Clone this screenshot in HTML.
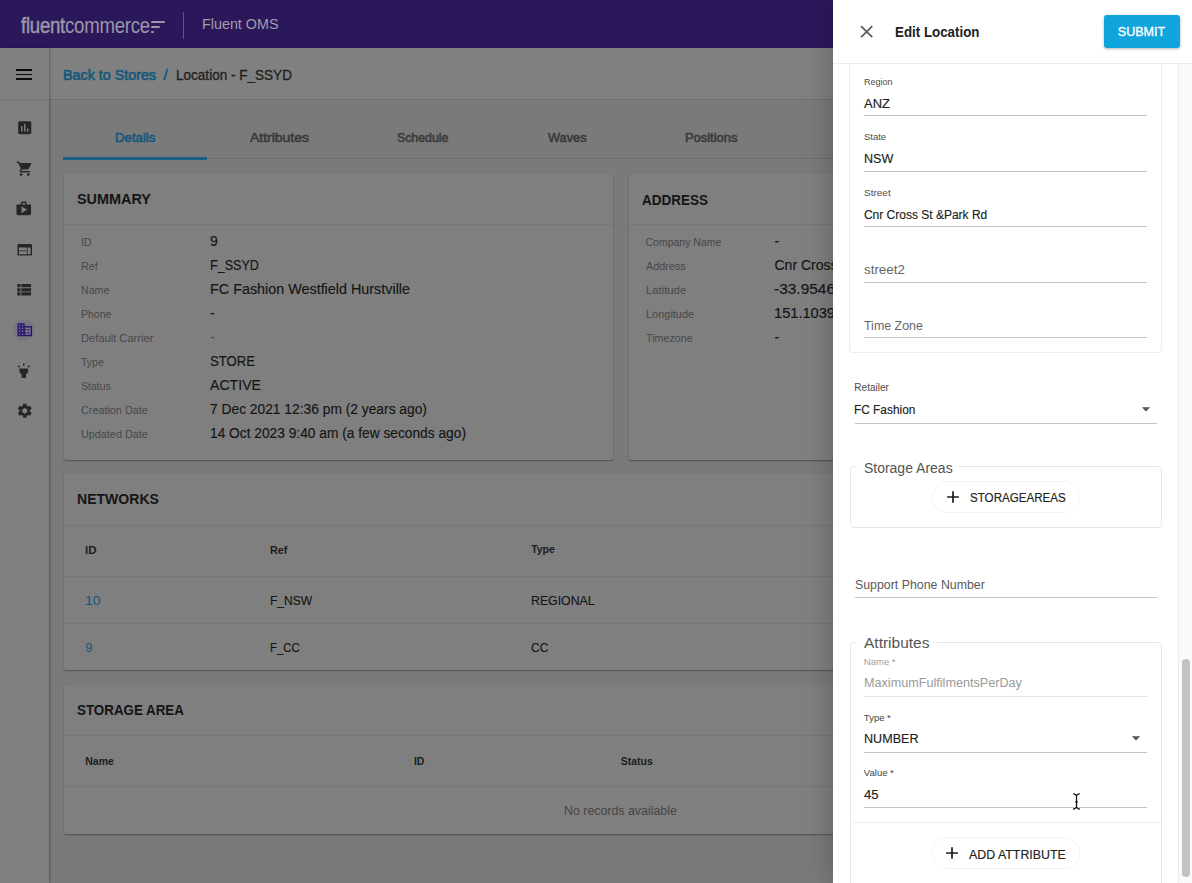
<!DOCTYPE html>
<html><head><meta charset="utf-8">
<style>
*{box-sizing:border-box;margin:0;padding:0}
html,body{width:1192px;height:883px;overflow:hidden;background:#7a7a7a;font-family:"Liberation Sans",sans-serif;color:#111}
.a{position:absolute;white-space:nowrap;line-height:1;transform-origin:0 0}
.b{position:absolute}
.card{position:absolute;background:#7f7f7f;box-shadow:0 1px 1.5px rgba(0,0,0,.35);border-radius:2px}
.hr{position:absolute;height:1px;background:#767676}
.ic{position:absolute;fill:#262626}
.ul{position:absolute;height:1px;background:#c4c4c4}
</style></head><body>
<!-- header -->
<div class="b" style="left:0;top:0;width:1192px;height:48px;background:#2b185b"></div>
<div class="a" style="left:21px;top:15px;font-size:22px;color:#9b97a7;transform-origin:0 0;transform:scaleX(0.846);letter-spacing:-0.3px"><span style="-webkit-text-stroke:0.5px #9b97a7">fluent</span>commerce</div>
<div class="b" style="left:151px;top:21px;width:14px;height:2px;background:#9b97a7;border-radius:1px"></div>
<div class="b" style="left:151px;top:25.5px;width:9px;height:2px;background:#9b97a7;border-radius:1px"></div>
<div class="b" style="left:151px;top:31px;width:3px;height:2px;background:#9b97a7;border-radius:1px"></div>
<div class="b" style="left:183px;top:12px;width:1px;height:27px;background:#5f5380"></div>

<!-- breadcrumb bar -->
<div class="b" style="left:49px;top:48px;width:1143px;height:52px;background:#808080"></div>
<div class="b" style="left:49px;top:99px;width:1143px;height:1px;background:#6f6f6f"></div>
<!-- sidebar -->
<div class="b" style="left:0;top:48px;width:49px;height:835px;background:#808080;box-shadow:1px 0 2px rgba(0,0,0,.3)"></div>
<div class="b" style="left:0;top:99px;width:49px;height:1px;background:#767676"></div>
<div class="b" style="left:16.1px;top:69.2px;width:16px;height:1.8px;background:#0c0c0c"></div><div class="b" style="left:16.1px;top:73.7px;width:16px;height:1.8px;background:#0c0c0c"></div><div class="b" style="left:16.1px;top:78.1px;width:16px;height:1.8px;background:#0c0c0c"></div>
<svg class="ic" style="left:15.5px;top:118.5px" width="17.5" height="17.5" viewBox="0 0 24 24"><path d="M19 3H5c-1.1 0-2 .9-2 2v14c0 1.1.9 2 2 2h14c1.1 0 2-.9 2-2V5c0-1.1-.9-2-2-2zM9 17H7v-7h2v7zm4 0h-2V7h2v10zm4 0h-2v-4h2v4z"/></svg>
<svg class="ic" style="left:15.8px;top:159.5px" width="17.5" height="17.5" viewBox="0 0 24 24"><path d="M7 18c-1.1 0-1.99.9-1.99 2S5.9 22 7 22s2-.9 2-2-.9-2-2-2zM1 2v2h2l3.6 7.59-1.35 2.45c-.16.28-.25.61-.25.96 0 1.1.9 2 2 2h12v-2H7.42c-.14 0-.25-.11-.25-.25l.03-.12.9-1.63h7.45c.75 0 1.410-.41 1.75-1.03l3.58-6.49c.08-.14.12-.31.12-.48 0-.55-.45-1-1-1H5.21l-.94-2H1zm16 16c-1.1 0-1.99.9-1.99 2s.89 2 1.99 2 2-.9 2-2-.9-2-2-2z"/></svg>
<svg class="ic" style="left:15px;top:199.5px" width="17.5" height="17.5" viewBox="0 0 24 24"><path d="M16 6V4c0-1.11-.89-2-2-2h-4c-1.11 0-2 .89-2 2v2H2v13c0 1.11.89 2 2 2h16c1.11 0 2-.89 2-2V6h-6zm-6-2h4v2h-4V4zM9 18V9l7.5 4L9 18z"/></svg>
<svg class="ic" style="left:15.5px;top:240.5px" width="17.5" height="17.5" viewBox="0 0 24 24"><path d="M20 4H4c-1.1 0-1.99.9-1.99 2L2 18c0 1.1.9 2 2 2h16c1.1 0 2-.9 2-2V6c0-1.1-.9-2-2-2zm-5 14H4v-4h11v4zm0-5H4V9h11v4zm5 5h-4V9h4v9z"/></svg>
<svg class="ic" style="left:13.95px;top:279.5px" width="19.5" height="19.5" viewBox="0 0 24 24"><path d="M4 14h4v-4H4v4zm0 5h4v-4H4v4zM4 9h4V5H4v4zm5 5h12v-4H9v4zm0 5h12v-4H9v4zM9 5v4h12V5H9z"/></svg>
<div class="b" style="left:13px;top:319px;width:22px;height:22px;border-radius:50%;background:rgba(70,40,140,.12)"></div>
<svg class="ic" style="left:15.5px;top:321px" width="17.5" height="17.5" viewBox="0 0 24 24"><path fill="#2a1870" d="M12 7V3H2v18h20V7H12zM6 19H4v-2h2v2zm0-4H4v-2h2v2zm0-4H4V9h2v2zm0-4H4V5h2v2zm4 12H8v-2h2v2zm0-4H8v-2h2v2zm0-4H8V9h2v2zm0-4H8V5h2v2zm10 12h-8v-2h2v-2h-2v-2h2v-2h-2V9h8v10zm-2-8h-2v2h2v-2zm0 4h-2v2h2v-2z"/></svg>
<svg class="ic" style="left:15px;top:362px" width="17.5" height="17.5" viewBox="0 0 24 24"><path d="M6 14l3 3v5h6v-5l3-3V9H6zm5-12h2v3h-2zM3.5 5.875L4.914 4.46l2.12 2.122L5.62 7.997zm13.46.71l2.123-2.12 1.414 1.414L18.375 8z"/></svg>
<svg class="ic" style="left:15.5px;top:402px" width="17.5" height="17.5" viewBox="0 0 24 24"><path d="M19.14 12.94c.04-.3.06-.61.06-.94 0-.32-.02-.64-.07-.94l2.03-1.58c.18-.14.23-.41.12-.61l-1.920-3.32c-.12-.22-.37-.29-.59-.22l-2.39.96c-.5-.38-1.03-.7-1.62-.94l-.36-2.54c-.04-.24-.24-.41-.48-.41h-3.84c-.24 0-.43.17-.47.41l-.36 2.54c-.59.24-1.13.57-1.62.94l-2.39-.96c-.22-.08-.47 0-.59.22L2.74 8.87c-.12.21-.08.47.12.61l2.03 1.58c-.05.3-.09.63-.09.94s.02.64.07.94l-2.03 1.58c-.18.14-.23.41-.12.61l1.92 3.32c.12.22.37.29.59.22l2.39-.96c.5.38 1.03.7 1.62.94l.36 2.54c.05.24.24.41.48.41h3.84c.24 0 .44-.17.47-.41l.36-2.54c.59-.24 1.13-.56 1.62-.94l2.39.96c.22.08.47 0 .59-.22l1.92-3.32c.12-.22.07-.47-.12-.61l-2.01-1.58zM12 15.6c-1.98 0-3.6-1.62-3.6-3.6s1.62-3.6 3.6-3.6 3.6 1.62 3.6 3.6-1.62 3.6-3.6 3.6z"/></svg>


<!-- tabs -->
<div class="b" style="left:63px;top:158px;width:780px;height:1px;background:#6c6c6c"></div>
<div class="b" style="left:63px;top:157px;width:144px;height:3px;background:#1a6183"></div>

<!-- cards -->
<div class="card" style="left:63.5px;top:174px;width:549px;height:285.5px"><div class="hr" style="left:0;top:50px;width:549px"></div></div>
<div class="card" style="left:628.5px;top:174px;width:600px;height:285.5px"><div class="hr" style="left:0;top:50px;width:600px"></div></div>
<div class="card" style="left:63.5px;top:474px;width:1140px;height:196px">
  <div class="hr" style="left:0;top:51px;width:1140px"></div>
  <div class="hr" style="left:0;top:102px;width:1140px"></div>
  <div class="hr" style="left:0;top:149px;width:1140px"></div>
</div>
<div class="card" style="left:63.5px;top:685px;width:1140px;height:149px">
  <div class="hr" style="left:0;top:50px;width:1140px"></div>
  <div class="hr" style="left:0;top:101px;width:1140px"></div>
</div>
<div class="a" style="left:202.00px;top:17.00px;font-size:14.5px;color:#a09cab;transform:scaleX(0.9889)">Fluent OMS</div>
<div class="a" style="left:62.90px;top:67.00px;font-size:15px;color:#13587a;-webkit-text-stroke:0.6px #13587a;transform:scaleX(0.9534)">Back to Stores</div>
<div class="a" style="left:163.46px;top:67.00px;font-size:15.5px;color:#13587a;-webkit-text-stroke:0.6px #13587a">/</div>
<div class="a" style="left:175.53px;top:67.00px;font-size:15px;color:#1e1e1e;-webkit-text-stroke:0.3px #1e1e1e;transform:scaleX(0.9030)">Location - F_SSYD</div>
<div class="a" style="left:115.14px;top:131.00px;font-size:13px;color:#13587a;-webkit-text-stroke:0.6px #13587a;transform:scaleX(1.0170)">Details</div>
<div class="a" style="left:249.51px;top:131.00px;font-size:13px;color:#3a3a3a;-webkit-text-stroke:0.6px #3a3a3a;transform:scaleX(1.0738)">Attributes</div>
<div class="a" style="left:397.07px;top:131.00px;font-size:13px;color:#3a3a3a;-webkit-text-stroke:0.6px #3a3a3a;transform:scaleX(0.9473)">Schedule</div>
<div class="a" style="left:547.55px;top:131.00px;font-size:13px;color:#3a3a3a;-webkit-text-stroke:0.6px #3a3a3a;transform:scaleX(0.9833)">Waves</div>
<div class="a" style="left:684.55px;top:131.00px;font-size:13px;color:#3a3a3a;-webkit-text-stroke:0.6px #3a3a3a;transform:scaleX(0.9934)">Positions</div>
<div class="a" style="left:77.10px;top:192.00px;font-size:14.5px;color:#151515;font-weight:700;transform:scaleX(0.9949)">SUMMARY</div>
<div class="a" style="left:81.03px;top:237.00px;font-size:10.5px;color:#474747">ID</div>
<div class="a" style="left:209.91px;top:234.00px;font-size:14px;color:#151515;-webkit-text-stroke:0.15px #151515">9</div>
<div class="a" style="left:81.02px;top:261.00px;font-size:10.5px;color:#474747;transform:scaleX(1.0251)">Ref</div>
<div class="a" style="left:209.96px;top:258.00px;font-size:14px;color:#151515;-webkit-text-stroke:0.15px #151515;transform:scaleX(0.8974)">F_SSYD</div>
<div class="a" style="left:81.03px;top:285.00px;font-size:10.5px;color:#474747;transform:scaleX(1.0117)">Name</div>
<div class="a" style="left:209.90px;top:282.00px;font-size:14px;color:#151515;-webkit-text-stroke:0.15px #151515;transform:scaleX(1.0255)">FC Fashion Westfield Hurstville</div>
<div class="a" style="left:81.03px;top:309.00px;font-size:10.5px;color:#474747">Phone</div>
<div class="a" style="left:209.91px;top:306.00px;font-size:14px;color:#151515;-webkit-text-stroke:0.15px #151515">-</div>
<div class="a" style="left:81.01px;top:333.00px;font-size:10.5px;color:#474747;transform:scaleX(1.0600)">Default Carrier</div>
<div class="a" style="left:209.91px;top:330.00px;font-size:14px;color:#13587a">-</div>
<div class="a" style="left:81.03px;top:357.00px;font-size:10.5px;color:#474747">Type</div>
<div class="a" style="left:209.94px;top:354.00px;font-size:14px;color:#151515;-webkit-text-stroke:0.15px #151515;transform:scaleX(0.9361)">STORE</div>
<div class="a" style="left:81.03px;top:381.00px;font-size:10.5px;color:#474747">Status</div>
<div class="a" style="left:209.91px;top:378.00px;font-size:14px;color:#151515;-webkit-text-stroke:0.15px #151515;transform:scaleX(1.0081)">ACTIVE</div>
<div class="a" style="left:81.02px;top:405.00px;font-size:10.5px;color:#474747;transform:scaleX(1.0303)">Creation Date</div>
<div class="a" style="left:209.92px;top:402.00px;font-size:14px;color:#151515;-webkit-text-stroke:0.15px #151515;transform:scaleX(0.9851)">7 Dec 2021 12:36 pm (2 years ago)</div>
<div class="a" style="left:81.02px;top:429.00px;font-size:10.5px;color:#474747;transform:scaleX(1.0303)">Updated Date</div>
<div class="a" style="left:209.92px;top:426.00px;font-size:14px;color:#151515;-webkit-text-stroke:0.15px #151515;transform:scaleX(0.9818)">14 Oct 2023 9:40 am (a few seconds ago)</div>
<div class="a" style="left:641.63px;top:193.00px;font-size:14.5px;color:#151515;font-weight:700;transform:scaleX(0.9300)">ADDRESS</div>
<div class="a" style="left:645.53px;top:237.00px;font-size:10.5px;color:#474747">Company Name</div>
<div class="a" style="left:774.51px;top:234.00px;font-size:14px;color:#151515;-webkit-text-stroke:0.15px #151515">-</div>
<div class="a" style="left:645.52px;top:261.00px;font-size:10.5px;color:#474747;transform:scaleX(1.0318)">Address</div>
<div class="a" style="left:774.51px;top:258.00px;font-size:14px;color:#151515;-webkit-text-stroke:0.15px #151515">Cnr Cross St &amp;Park Rd</div>
<div class="a" style="left:645.50px;top:285.00px;font-size:10.5px;color:#474747;transform:scaleX(1.0753)">Latitude</div>
<div class="a" style="left:774.46px;top:282.00px;font-size:14px;color:#151515;-webkit-text-stroke:0.15px #151515;transform:scaleX(1.1049)">-33.9546</div>
<div class="a" style="left:645.52px;top:309.00px;font-size:10.5px;color:#474747;transform:scaleX(1.0439)">Longitude</div>
<div class="a" style="left:774.49px;top:306.00px;font-size:14px;color:#151515;-webkit-text-stroke:0.15px #151515;transform:scaleX(1.0448)">151.1039</div>
<div class="a" style="left:645.52px;top:333.00px;font-size:10.5px;color:#474747;transform:scaleX(1.0226)">Timezone</div>
<div class="a" style="left:774.51px;top:330.00px;font-size:14px;color:#151515;-webkit-text-stroke:0.15px #151515">-</div>
<div class="a" style="left:77.01px;top:492.00px;font-size:14.5px;color:#151515;font-weight:700;transform:scaleX(0.9691)">NETWORKS</div>
<div class="a" style="left:85.40px;top:545.00px;font-size:10.5px;color:#1c1c1c;font-weight:700;transform:scaleX(1.0958)">ID</div>
<div class="a" style="left:269.82px;top:545.00px;font-size:10.5px;color:#1c1c1c;font-weight:700;transform:scaleX(1.0255)">Ref</div>
<div class="a" style="left:531.13px;top:544.00px;font-size:10.5px;color:#1c1c1c;font-weight:700">Type</div>
<div class="a" style="left:85.31px;top:594.00px;font-size:13px;color:#13587a;transform:scaleX(1.0768)">10</div>
<div class="a" style="left:269.78px;top:594.00px;font-size:13px;color:#151515;-webkit-text-stroke:0.15px #151515;transform:scaleX(0.9285)">F_NSW</div>
<div class="a" style="left:531.07px;top:594.00px;font-size:13px;color:#151515;-webkit-text-stroke:0.15px #151515;transform:scaleX(0.9475)">REGIONAL</div>
<div class="a" style="left:85.34px;top:641.00px;font-size:13px;color:#13587a">9</div>
<div class="a" style="left:269.80px;top:641.00px;font-size:13px;color:#151515;-webkit-text-stroke:0.15px #151515;transform:scaleX(0.8776)">F_CC</div>
<div class="a" style="left:531.08px;top:641.00px;font-size:13px;color:#151515;-webkit-text-stroke:0.15px #151515;transform:scaleX(0.9233)">CC</div>
<div class="a" style="left:77.03px;top:703.00px;font-size:14.5px;color:#151515;font-weight:700;transform:scaleX(0.9217)">STORAGE AREA</div>
<div class="a" style="left:85.23px;top:756.00px;font-size:10.5px;color:#1c1c1c;font-weight:700">Name</div>
<div class="a" style="left:413.93px;top:756.00px;font-size:10.5px;color:#1c1c1c;font-weight:700">ID</div>
<div class="a" style="left:620.63px;top:756.00px;font-size:10.5px;color:#1c1c1c;font-weight:700">Status</div>
<div class="a" style="left:564.37px;top:804.00px;font-size:13px;color:#454545;transform:scaleX(0.9523)">No records available</div>

<!-- drawer -->
<div class="b" style="left:833px;top:0;width:359px;height:883px;background:#fff;box-shadow:-4px 0 24px rgba(0,0,0,.2)"></div>
<div class="b" style="left:833px;top:63px;width:359px;height:1px;background:#ececec"></div>
<!-- close icon -->
<svg class="b" style="left:855.8px;top:21px" width="21.3" height="21.3" viewBox="0 0 24 24"><path fill="#5c5c5c" d="M19 6.41L17.59 5 12 10.59 6.41 5 5 6.41 10.59 12 5 17.59 6.41 19 12 13.41 17.59 19 19 17.59 13.41 12z"/></svg>
<!-- submit -->
<div class="b" style="left:1104px;top:15px;width:75.5px;height:33px;background:#0fa5dc;border-radius:3px;box-shadow:0 1px 3px rgba(0,0,0,.3)"></div>
<!-- address card in drawer -->
<div class="b" style="left:849px;top:64px;width:312.5px;height:288.5px;border:1px solid #ededed;border-top:none;border-radius:0 0 4px 4px"></div>
<div class="ul" style="left:864px;top:115px;width:283px"></div>
<div class="ul" style="left:864px;top:170.5px;width:283px"></div>
<div class="ul" style="left:864px;top:226px;width:283px"></div>
<div class="ul" style="left:864px;top:281.5px;width:283px"></div>
<div class="ul" style="left:864px;top:337px;width:283px"></div>
<!-- retailer -->
<div class="ul" style="left:855px;top:422.5px;width:301.5px"></div>
<svg class="b" style="left:1135.8px;top:398.9px" width="20" height="20" viewBox="0 0 24 24"><path fill="#555" d="M7 10l5 5 5-5z"/></svg>
<!-- storage areas fieldset -->
<div class="b" style="left:849.5px;top:466px;width:312px;height:61.5px;border:1px solid #e6e6e6;border-radius:4px"></div>
<div class="b" style="left:857px;top:460px;width:102px;height:10px;background:#fff"></div>
<div class="b" style="left:931.5px;top:481px;width:148px;height:31.5px;border:1px dotted #e8e8e8;border-radius:16px"></div>
<svg class="b" style="left:942.5px;top:487px" width="20" height="20" viewBox="0 0 24 24"><path fill="#1a1a1a" d="M19 13h-6v6h-2v-6H5v-2h6V5h2v6h6v2z"/></svg>
<!-- support phone -->
<div class="ul" style="left:855px;top:597px;width:301.5px"></div>
<!-- attributes fieldset -->
<div class="b" style="left:849.5px;top:641.5px;width:312px;height:260px;border:1px solid #e6e6e6;border-radius:4px"></div>
<div class="b" style="left:857px;top:630px;width:80px;height:14px;background:#fff"></div>
<div class="ul" style="left:864px;top:696px;width:283px;background:#e2e2e2"></div>
<div class="ul" style="left:864px;top:751.5px;width:283px"></div>
<svg class="b" style="left:1125.7px;top:728.2px" width="20" height="20" viewBox="0 0 24 24"><path fill="#555" d="M7 10l5 5 5-5z"/></svg>
<div class="ul" style="left:864px;top:807px;width:283px"></div>
<div class="b" style="left:850px;top:822px;width:311px;height:1px;background:#eeeeee"></div>
<div class="b" style="left:931px;top:837px;width:148.5px;height:32px;border:1px dotted #e8e8e8;border-radius:16px"></div>
<svg class="b" style="left:941.5px;top:843px" width="20" height="20" viewBox="0 0 24 24"><path fill="#1a1a1a" d="M19 13h-6v6h-2v-6H5v-2h6V5h2v6h6v2z"/></svg>
<!-- scrollbar -->
<div class="b" style="left:1178px;top:64px;width:14px;height:819px;background:#fafafa;border-left:1px solid #ececec"></div>
<div class="b" style="left:1181.5px;top:659px;width:8.5px;height:218px;background:#c2c2c2;border-radius:4px"></div>
<!-- text cursor -->
<svg class="b" style="left:1070px;top:790px" width="14" height="22" viewBox="0 0 14 22"><path d="M3.3 3.5L6.5 5.3L9.7 3.5M6.5 5.3V17.5M3.3 19.4L6.5 17.5L9.7 19.4M5.6 12h1.8" fill="none" stroke="#fff" stroke-width="2.6" stroke-opacity=".6"/><path d="M3.3 3.5L6.5 5.3L9.7 3.5M6.5 5.3V17.5M3.3 19.4L6.5 17.5L9.7 19.4" fill="none" stroke="#0a0a0a" stroke-width="1.25"/><rect x="5.5" y="11" width="2" height="2" fill="#0a0a0a"/></svg>
<div class="a" style="left:895.23px;top:25.00px;font-size:14.5px;color:#222;font-weight:700;transform:scaleX(0.9193)">Edit Location</div>
<div class="a" style="left:1117.86px;top:26.00px;font-size:12.5px;color:#fff;-webkit-text-stroke:0.35px #fff">SUBMIT</div>
<div class="a" style="left:863.98px;top:77.00px;font-size:9.5px;color:#4c4c4c;transform:scaleX(0.9509)">Region</div>
<div class="a" style="left:863.85px;top:98.00px;font-size:12px;color:#222;-webkit-text-stroke:0.15px #222;transform:scaleX(1.0794)">ANZ</div>
<div class="a" style="left:863.97px;top:132.00px;font-size:9.5px;color:#4c4c4c">State</div>
<div class="a" style="left:863.86px;top:153.00px;font-size:12px;color:#222;-webkit-text-stroke:0.15px #222;transform:scaleX(1.0457)">NSW</div>
<div class="a" style="left:863.95px;top:188.00px;font-size:9.5px;color:#4c4c4c;transform:scaleX(1.0529)">Street</div>
<div class="a" style="left:863.88px;top:209.00px;font-size:12px;color:#222;-webkit-text-stroke:0.15px #222">Cnr Cross St &amp;Park Rd</div>
<div class="a" style="left:863.73px;top:264.00px;font-size:12.5px;color:#666;transform:scaleX(1.0711)">street2</div>
<div class="a" style="left:863.77px;top:320.00px;font-size:12.5px;color:#666;transform:scaleX(0.9930)">Time Zone</div>
<div class="a" style="left:854.35px;top:383.00px;font-size:10px;color:#4c4c4c">Retailer</div>
<div class="a" style="left:854.38px;top:404.00px;font-size:12.5px;color:#222;-webkit-text-stroke:0.15px #222;transform:scaleX(0.9493)">FC Fashion</div>
<div class="a" style="left:863.91px;top:461.00px;font-size:14px;color:#555">Storage Areas</div>
<div class="a" style="left:970.29px;top:492.00px;font-size:12.5px;color:#222;-webkit-text-stroke:0.15px #222;transform:scaleX(0.9277)">STORAGEAREAS</div>
<div class="a" style="left:854.77px;top:579.00px;font-size:12.5px;color:#5a5a5a;transform:scaleX(0.9887)">Support Phone Number</div>
<div class="a" style="left:863.66px;top:636.00px;font-size:14px;color:#555;transform:scaleX(1.1073)">Attributes</div>
<div class="a" style="left:863.87px;top:657.00px;font-size:9.5px;color:#a0a0a0">Name *</div>
<div class="a" style="left:863.76px;top:677.00px;font-size:12.5px;color:#9a9a9a;transform:scaleX(1.0103)">MaximumFulfilmentsPerDay</div>
<div class="a" style="left:863.87px;top:713.00px;font-size:9.5px;color:#444">Type *</div>
<div class="a" style="left:863.76px;top:733.00px;font-size:12.5px;color:#222;-webkit-text-stroke:0.15px #222;transform:scaleX(1.0057)">NUMBER</div>
<div class="a" style="left:863.87px;top:768.00px;font-size:9.5px;color:#444">Value *</div>
<div class="a" style="left:863.74px;top:789.00px;font-size:12.5px;color:#222;-webkit-text-stroke:0.15px #222;transform:scaleX(1.0436)">45</div>
<div class="a" style="left:969.37px;top:849.00px;font-size:12.5px;color:#222;-webkit-text-stroke:0.15px #222;transform:scaleX(0.9914)">ADD ATTRIBUTE</div>
</body></html>
